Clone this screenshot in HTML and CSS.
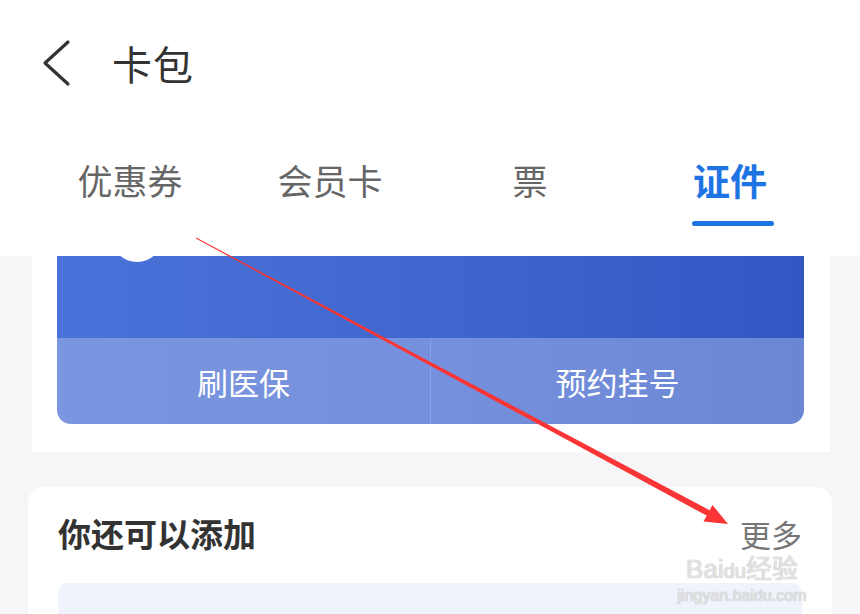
FILE: index.html
```html
<!DOCTYPE html>
<html lang="zh">
<head>
    <meta charset="UTF-8">
    <meta name="viewport" content="width=device-width, initial-scale=1.0">
    <title>卡包</title>
    <link rel="stylesheet" href="styles.css">
</head>
<body>

    <div class="topContainer">
        <div class="titleBar">
            <svg class="backIcon" width="40" height="50" viewBox="0 0 40 50">
                <path d="M27 3 L4 24 L27 45" fill="none" stroke="#333" stroke-width="3.2" stroke-linecap="round" stroke-linejoin="round"/>
            </svg>
            <h1>卡包</h1>
        </div>

        <div class="tabBar">
            <div class="tab">优惠券</div>
            <div class="tab">会员卡</div>
            <div class="tab">票</div>
            <div class="tab active">证件</div>
        </div>
    </div>

    <div class="cardSection">
        <div class="blueCard">
            <div class="avatarBump"></div>
            <div class="cardTop"></div>
            <div class="cardActions">
                <div class="action">刷医保</div>
                <div class="action">预约挂号</div>
            </div>
        </div>
    </div>

    <div class="addSection">
        <div class="addHeader">
            <h2>你还可以添加</h2>
            <span class="more">更多</span>
        </div>
        <div class="addBox"></div>
    </div>

    <!-- annotation drawn over the screenshot -->
    <svg class="arrow" width="860" height="614" viewBox="0 0 860 614">
        <polygon points="195.8,238.4 196.2,237.6 713.8,512.4 710.2,517.6" fill="#fb3535"/>
        <polygon points="728,524 703.5,521.5 712.5,505" fill="#fb3535"/>
    </svg>

    <div class="watermark">
        <div class="wmLogo">Bai<span class="wmDu">du</span>经验</div>
        <div class="wmUrl">jingyan.baidu.com</div>
    </div>

</body>
</html>
```

FILE: styles.css
```css
* {
    margin: 0;
    padding: 0;
    box-sizing: border-box;
}

body {
    width: 860px;
    height: 614px;
    overflow: hidden;
    position: relative;
    background-color: #f6f6f8;
    font-family: "Noto Sans CJK SC", "Noto Sans", sans-serif;
}

.topContainer {
    background-color: white;
    height: 256px;
}

.titleBar {
    height: 130px;
    display: flex;
    align-items: center;
    padding-left: 41px;
    padding-bottom: 4px;
}

.backIcon {
    margin-top: 2px;
}

.titleBar h1 {
    font-size: 40px;
    font-weight: 400;
    color: #333;
    margin-left: 31px;
    letter-spacing: 1px;
}

.tabBar {
    display: flex;
    padding-left: 30px;
    padding-top: 25px;
}

.tab {
    width: 200px;
    text-align: center;
    font-size: 35px;
    color: #666;
    line-height: 50px;
}

.tab.active {
    color: #1f74e4;
    font-weight: 700;
    font-size: 37px;
}

.tab.active::after {
    content: "";
    display: block;
    width: 82px;
    height: 5px;
    margin-top: 16px;
    margin-left: 62px;
    border-radius: 3px;
    background-color: #1f74e4;
}

.cardSection {
    background-color: white;
    margin: 0 30px 0 32px;
    padding: 0 26px 28px 25px;
    height: 196px;
}

.blueCard {
    position: relative;
    border-radius: 0 0 14px 14px;
    overflow: hidden;
}

.cardTop {
    height: 82px;
    background: linear-gradient(to right, #4a73d9, #3e64cc 60%, #3356c3);
}

.avatarBump {
    position: absolute;
    left: 55px;
    top: -42px;
    width: 50px;
    height: 48px;
    border-radius: 50%;
    background-color: white;
}

.cardActions {
    height: 86px;
    display: flex;
    background: linear-gradient(to right, #7a96e0, #7590dc 50%, #6b87d3);
}

.action {
    flex: 1;
    display: flex;
    align-items: center;
    justify-content: center;
    font-size: 31px;
    color: white;
}

.action + .action {
    border-left: 1px solid rgba(255, 255, 255, 0.15);
}

.addSection {
    background-color: white;
    margin: 35px 28px 0 28px;
    border-radius: 16px 16px 0 0;
    padding: 21px 30px 0 30px;
    height: 200px;
}

.addHeader {
    display: flex;
    justify-content: space-between;
    align-items: center;
    height: 50px;
}

.addHeader h2 {
    font-size: 33px;
    font-weight: 700;
    color: #333;
}

.more {
    font-size: 31px;
    line-height: 1;
    color: #777;
}

.addBox {
    margin-top: 25px;
    height: 80px;
    border-radius: 10px;
    background-color: #eef3fc;
}

.arrow {
    position: absolute;
    left: 0;
    top: 0;
}

.watermark {
    position: absolute;
    left: 662px;
    top: 557px;
    width: 160px;
    text-align: center;
    color: rgba(255, 255, 255, 0.6);
    text-shadow: 0 0 1px #bbb, 0 0 1px #bbb;
    font-family: "Liberation Sans", "Noto Sans CJK SC", sans-serif;
}

.wmLogo {
    font-size: 26px;
    line-height: 24px;
}

.wmDu {
    font-size: 20px;
}

.wmUrl {
    font-size: 16px;
    line-height: 20px;
    margin-top: 3px;
}
```
